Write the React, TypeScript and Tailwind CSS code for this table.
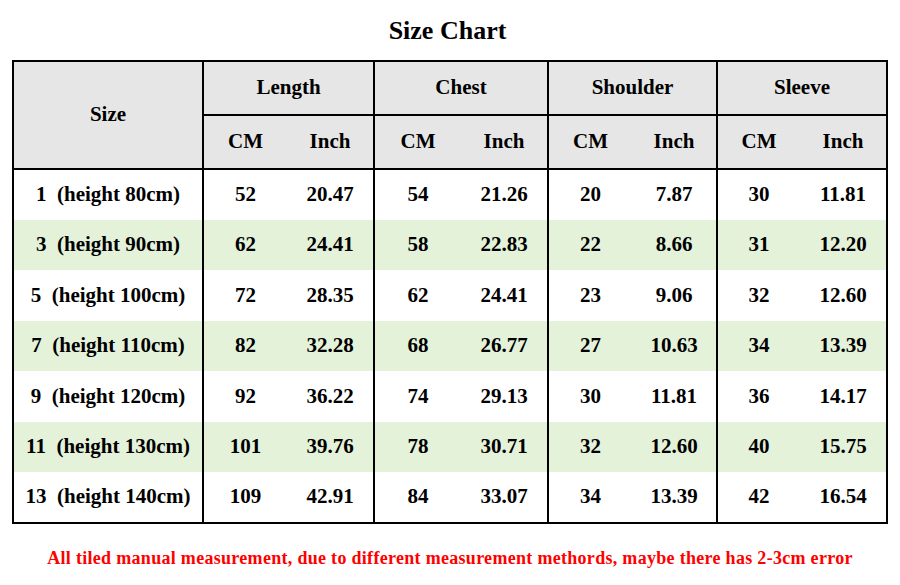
const rows = [
  ['1', '80', '52', '20.47', '54', '21.26', '20', '7.87', '30', '11.81'],
  ['3', '90', '62', '24.41', '58', '22.83', '22', '8.66', '31', '12.20'],
  ['5', '100', '72', '28.35', '62', '24.41', '23', '9.06', '32', '12.60'],
  ['7', '110', '82', '32.28', '68', '26.77', '27', '10.63', '34', '13.39'],
  ['9', '120', '92', '36.22', '74', '29.13', '30', '11.81', '36', '14.17'],
  ['11', '130', '101', '39.76', '78', '30.71', '32', '12.60', '40', '15.75'],
  ['13', '140', '109', '42.91', '84', '33.07', '34', '13.39', '42', '16.54'],
];

const heights = ['h-[51px]', 'h-[50px]', 'h-[51px]', 'h-[50px]', 'h-[51px]', 'h-[50px]', 'h-[51px]'];

export default function App() {
  return (
    <div
      className="w-[900px] h-[585px] bg-white text-black font-bold overflow-hidden"
      style={{ fontFamily: '"Liberation Serif", "Times New Roman", serif' }}
    >
      {/* Title */}
      <h1 className="h-[60px] pt-[13px] text-center text-[26px] leading-[36px] pr-[5px]">Size Chart</h1>

      {/* Table */}
      <table className="ml-[12px] w-[874px] table-fixed border-collapse border-2 border-black text-[21px] text-center">
        <colgroup>
          <col className="w-[190px]" />
          <col className="w-[84px]" />
          <col className="w-[87px]" />
          <col className="w-[87px]" />
          <col className="w-[87px]" />
          <col className="w-[84px]" />
          <col className="w-[85px]" />
          <col className="w-[83px]" />
          <col className="w-[87px]" />
        </colgroup>
        <thead className="bg-[#e6e6e6]">
          <tr className="h-[54px]">
            <th rowSpan={2} className="border-2 border-black">Size</th>
            <th colSpan={2} className="border-2 border-black">Length</th>
            <th colSpan={2} className="border-2 border-black">Chest</th>
            <th colSpan={2} className="border-2 border-black">Shoulder</th>
            <th colSpan={2} className="border-2 border-black">Sleeve</th>
          </tr>
          <tr className="h-[54px] border-b-2 border-black">
            {['Length', 'Chest', 'Shoulder', 'Sleeve'].map((g) => (
              <>
                <th key={g + 'cm'} className="border-l-2 border-black">CM</th>
                <th key={g + 'in'} className="border-r-2 border-black">Inch</th>
              </>
            ))}
          </tr>
        </thead>
        <tbody>
          {rows.map((r, i) => (
            <tr key={r[0]} className={`${heights[i]} ${i % 2 === 1 ? 'bg-[#e4f2da]' : 'bg-white'}`}>
              <td className="border-r-2 border-black">
                {r[0]}&nbsp;&nbsp;(height {r[1]}cm)
              </td>
              <td>{r[2]}</td>
              <td className="border-r-2 border-black">{r[3]}</td>
              <td>{r[4]}</td>
              <td className="border-r-2 border-black">{r[5]}</td>
              <td>{r[6]}</td>
              <td className="border-r-2 border-black">{r[7]}</td>
              <td>{r[8]}</td>
              <td>{r[9]}</td>
            </tr>
          ))}
        </tbody>
      </table>

      {/* Note */}
      <p className="mt-[23px] text-center text-[18px] leading-[22px] text-[#ff0000] tracking-[0.3px]">
        All tiled manual measurement, due to different measurement methords, maybe there has 2-3cm error
      </p>
    </div>
  );
}
